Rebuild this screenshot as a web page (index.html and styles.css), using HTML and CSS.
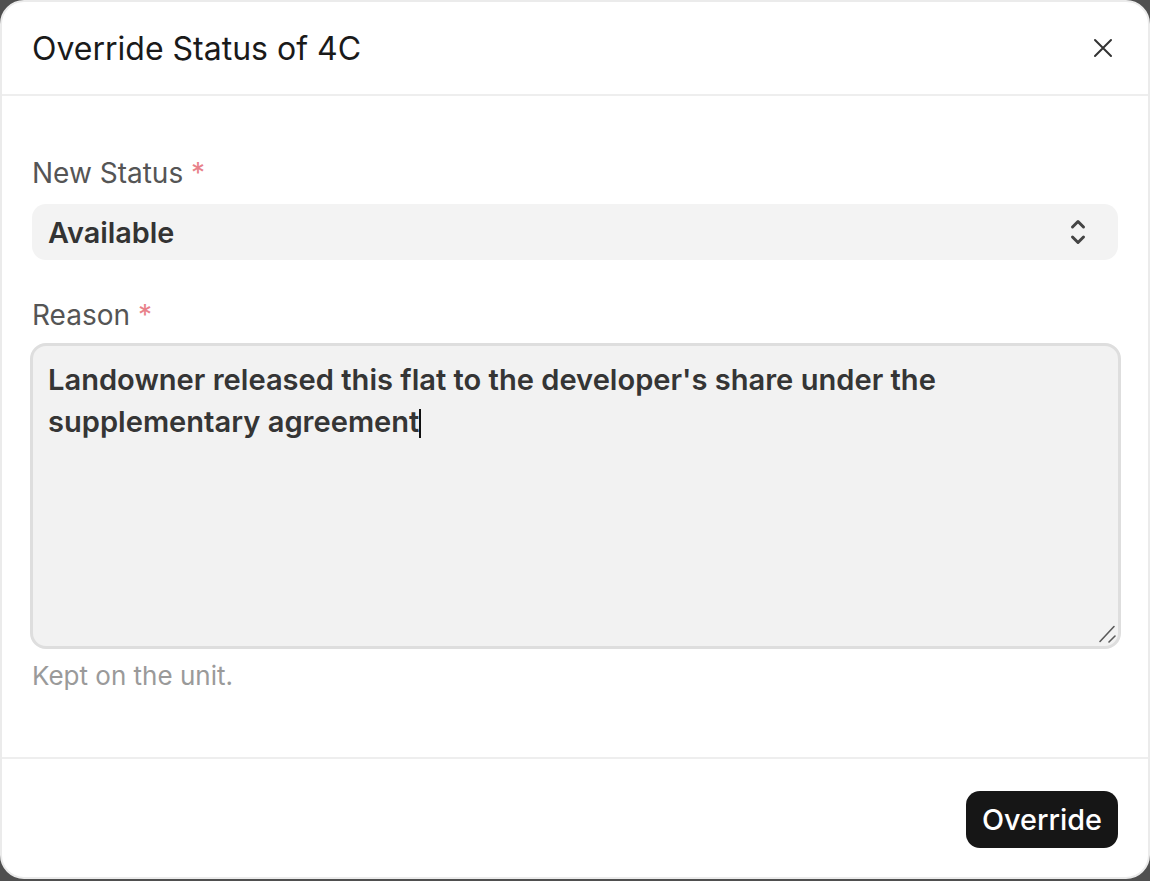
FILE: index.html
```html
<!DOCTYPE html>
<html lang="en">
<head>
<meta charset="utf-8">
<title>Override Status of 4C</title>
<link rel="stylesheet" href="styles.css">
</head>
<body>
<div class="dialog" role="dialog" aria-labelledby="dlg-title">
  <header class="header">
    <h2 class="title" id="dlg-title">Override Status of 4C</h2>
    <button class="close" aria-label="Close">
      <svg width="20" height="20" viewBox="0 0 20 20" fill="none" stroke="#333" stroke-width="2" stroke-linecap="round"><path d="M2 2 L18 18 M18 2 L2 18"/></svg>
    </button>
  </header>
  <section class="body">
    <div class="label">New Status <span class="req">*</span></div>
    <div class="select">
      <span>Available</span>
      <svg class="chev" width="16" height="28" viewBox="0 0 16 28" fill="none" stroke="#444" stroke-width="3" stroke-linecap="round" stroke-linejoin="round"><path d="M2.5 9 L8 3.5 L13.5 9"/><path d="M2.5 19 L8 24.5 L13.5 19"/></svg>
    </div>
    <div class="label label-2">Reason <span class="req">*</span></div>
    <div class="textarea">Landowner released this flat to the developer's share under the<br>supplementary agreement<span class="caret"></span>
      <svg class="grip" width="18" height="18" viewBox="0 0 18 18" fill="none" stroke="#5a5a5a" stroke-width="1.6" stroke-linecap="round"><path d="M2 16.5 L16 1.5"/><path d="M11 17 L17 11"/></svg>
    </div>
    <div class="help">Kept on the unit.</div>
  </section>
  <footer class="footer">
    <button class="primary">Override</button>
  </footer>
</div>
</body>
</html>
```
FILE: styles.css
```css
html, body {
  margin: 0;
  padding: 0;
  background: #4f4f4f;
  font-family: Inter, "Noto Sans", "Liberation Sans", sans-serif;
}
.dialog {
  box-sizing: border-box;
  width: 1150px;
  height: 879px;
  border: 2px solid #ebebeb;
  border-radius: 24px;
  background: #fff;
  display: flex;
  flex-direction: column;
  overflow: hidden;
}
.header {
  box-sizing: border-box;
  height: 94px;
  flex: none;
  border-bottom: 2px solid #eeeeee;
  display: flex;
  align-items: center;
  justify-content: space-between;
  padding: 0 35px 0 30px;
}
.title {
  margin: 0;
  font-size: 32px;
  font-weight: 400;
  color: #1a1a1a;
}
.close {
  border: 0;
  background: none;
  padding: 0;
  width: 20px;
  height: 20px;
  display: flex;
}
.body {
  box-sizing: border-box;
  height: 663px;
  flex: none;
  padding: 59px 30px 0;
  border-bottom: 2px solid #eeeeee;
  display: flex;
  flex-direction: column;
}
.label {
  font-size: 28px;
  line-height: 36px;
  color: #555555;
  margin-bottom: 13px;
}
.label-2 {
  margin-top: 37px;
  margin-bottom: 10px;
}
.req {
  color: #e8818a;
}
.select {
  box-sizing: border-box;
  height: 56px;
  border-radius: 14px;
  background: #f3f3f3;
  padding: 0 32px 0 16px;
  display: flex;
  align-items: center;
  justify-content: space-between;
  font-size: 28.8px;
  font-weight: 600;
  color: #333333;
}
.textarea {
  position: relative;
  box-sizing: border-box;
  height: 306px;
  margin: 0 -3px 0 -2px;
  border: 3px solid #dedede;
  border-radius: 16px;
  background: #f2f2f2;
  padding: 13px 15px 14px;
  font-size: 29.1px;
  font-weight: 600;
  line-height: 42px;
  color: #353535;
}
.caret {
  display: inline-block;
  width: 2px;
  height: 29px;
  background: #111;
  vertical-align: -6px;
}
.grip {
  position: absolute;
  right: 2px;
  bottom: 3px;
}
.help {
  margin-top: 11px;
  font-size: 26px;
  line-height: 32px;
  color: #9a9a9a;
}
.footer {
  flex: 1;
  display: flex;
  justify-content: flex-end;
  align-items: flex-start;
  padding: 32px 30px 0;
}
.primary {
  box-sizing: border-box;
  height: 57px;
  border: 0;
  border-radius: 14px;
  background: #161616;
  color: #ffffff;
  font-family: inherit;
  font-size: 28.8px;
  font-weight: 500;
  padding: 0 16px;
}
```
